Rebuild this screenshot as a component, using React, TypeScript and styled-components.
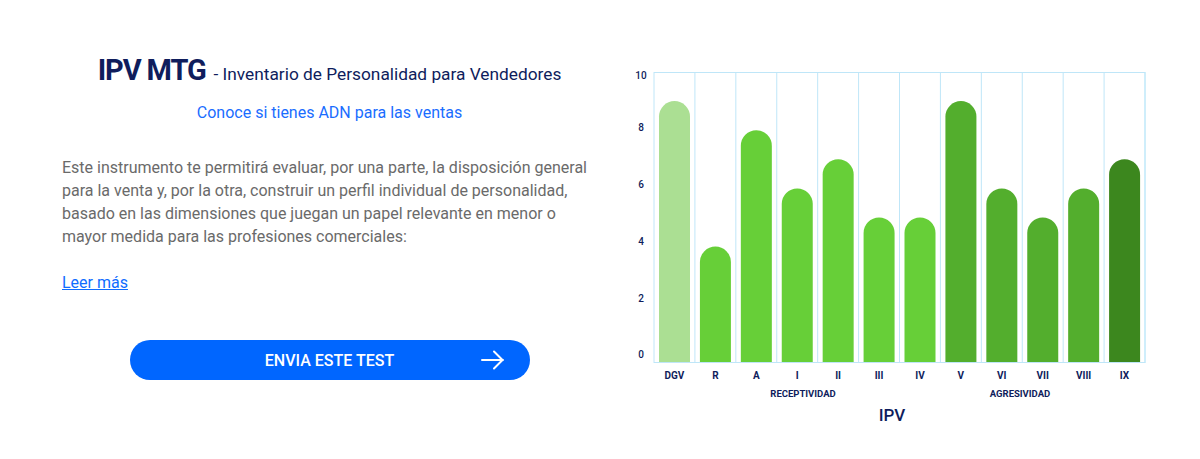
import React from 'react';
import styled, { createGlobalStyle } from 'styled-components';

const GlobalStyle = createGlobalStyle`
  body {
    margin: 0;
    background: #ffffff;
    font-family: Roboto, 'Liberation Sans', sans-serif;
  }
`;

const NAVY = '#0f1d5c';

const Page = styled.div`
  display: flex;
  align-items: flex-start;
  width: 1200px;
  height: 459px;
  padding-left: 62px;
  box-sizing: border-box;
`;

const Intro = styled.section`
  width: 535px;
  padding-top: 52px;
  display: flex;
  flex-direction: column;
`;

const Title = styled.h1`
  margin: 0;
  text-align: center;
  line-height: 34px;
  color: ${NAVY};
  font-weight: 400;
`;

const TitleMain = styled.span`
  font-size: 29px;
  font-weight: 700;
  letter-spacing: -1.1px;
`;

const TitleSub = styled.span`
  font-size: 17.3px;
`;

const Tagline = styled.p`
  margin: 12px 0 0;
  text-align: center;
  font-size: 16px;
  line-height: 20px;
  color: #1a6dff;
`;

const Body = styled.p`
  margin: 33px 0 0;
  font-size: 16px;
  line-height: 23px;
  color: #6a6a6a;
`;

const MoreLink = styled.a`
  margin-top: 25px;
  align-self: flex-start;
  font-size: 16px;
  line-height: 20px;
  color: #0f6cff;
  text-decoration: underline;
`;

const SendButton = styled.button`
  margin-top: 47px;
  align-self: center;
  width: 400px;
  height: 40px;
  border: none;
  border-radius: 20px;
  background: #0066ff;
  color: #ffffff;
  font-family: Roboto, sans-serif;
  font-size: 16px;
  font-weight: 500;
  display: grid;
  grid-template-columns: 1fr auto 1fr;
  align-items: center;
  padding: 0 25px;
`;

const ButtonLabel = styled.span`
  grid-column: 2;
`;

const ButtonIcon = styled.svg`
  grid-column: 3;
  justify-self: end;
`;

const ChartBox = styled.div`
  margin-left: 23px;
  margin-top: 60px;
  width: 540px;
  height: 370px;
`;

const data = [
  { label: 'DGV', value: 9, color: '#abdf93' },
  { label: 'R', value: 4, color: '#67cf38' },
  { label: 'A', value: 8, color: '#67cf38' },
  { label: 'I', value: 6, color: '#67cf38' },
  { label: 'II', value: 7, color: '#67cf38' },
  { label: 'III', value: 5, color: '#67cf38' },
  { label: 'IV', value: 5, color: '#67cf38' },
  { label: 'V', value: 9, color: '#53ae2d' },
  { label: 'VI', value: 6, color: '#53ae2d' },
  { label: 'VII', value: 5, color: '#53ae2d' },
  { label: 'VIII', value: 6, color: '#53ae2d' },
  { label: 'IX', value: 7, color: '#3c871e' },
];

const ticks = [
  { text: '10', y: 15 },
  { text: '8', y: 67 },
  { text: '6', y: 124 },
  { text: '4', y: 181 },
  { text: '2', y: 238 },
  { text: '0', y: 294 },
];

const Chart = () => {
  const left = 34;
  const right = 525;
  const top = 12;
  const bottom = 303;
  const colW = (right - left) / data.length;
  const unit = (bottom - top) / 10;
  const barW = 31;
  const r = barW / 2;

  return (
    <svg width="540" height="370" viewBox="0 0 540 370">
      {data.map((_, i) => (
        <line
          key={'g' + i}
          x1={left + colW * i}
          x2={left + colW * i}
          y1={top}
          y2={bottom}
          stroke="#bfe6f8"
          strokeWidth="1"
        />
      ))}
      <line x1={right} x2={right} y1={top} y2={bottom} stroke="#cfeefb" strokeWidth="2" />
      <line x1={left} x2={right} y1={top + 0.5} y2={top + 0.5} stroke="#bfe6f8" strokeWidth="1" />
      <line x1={left} x2={right} y1={bottom - 0.5} y2={bottom - 0.5} stroke="#bfe6f8" strokeWidth="1" />

      {data.map((d, i) => {
        const x = left + colW * i + 5;
        const h = d.value * unit;
        const y = bottom - h;
        return (
          <path
            key={d.label}
            d={`M${x} ${bottom - 1} V${y + r} A${r} ${r} 0 0 1 ${x + barW} ${y + r} V${bottom - 1} Z`}
            fill={d.color}
          />
        );
      })}

      {ticks.map((t) => (
        <text
          key={t.text}
          x="21"
          y={t.y}
          textAnchor="middle"
          dominantBaseline="central"
          fontFamily="Roboto, sans-serif"
          fontSize="10"
          fontWeight="500"
          fill={NAVY}
        >
          {t.text}
        </text>
      ))}

      {data.map((d, i) => (
        <text
          key={'l' + d.label}
          x={left + colW * (i + 0.5)}
          y="315"
          textAnchor="middle"
          dominantBaseline="central"
          fontFamily="Roboto, sans-serif"
          fontSize="10"
          fontWeight="700"
          fill={NAVY}
        >
          {d.label}
        </text>
      ))}

      <text x="183" y="333" textAnchor="middle" dominantBaseline="central" fontFamily="Roboto, sans-serif" fontSize="9.5" fontWeight="700" fill={NAVY}>
        RECEPTIVIDAD
      </text>
      <text x="400" y="333" textAnchor="middle" dominantBaseline="central" fontFamily="Roboto, sans-serif" fontSize="9.5" fontWeight="700" fill={NAVY}>
        AGRESIVIDAD
      </text>
      <text x="272" y="355" textAnchor="middle" dominantBaseline="central" fontFamily="Roboto, sans-serif" fontSize="17" fontWeight="500" fill={NAVY}>
        IPV
      </text>
    </svg>
  );
};

export default function App() {
  return (
    <>
      <GlobalStyle />
      <Page>
        <Intro>
          <Title>
            <TitleMain>IPV MTG</TitleMain> <TitleSub>- Inventario de Personalidad para Vendedores</TitleSub>
          </Title>
          <Tagline>Conoce si tienes ADN para las ventas</Tagline>
          <Body>
            Este instrumento te permitirá evaluar, por una parte, la disposición general para la venta y,
            por la otra, construir un perfil individual de personalidad, basado en las dimensiones que
            juegan un papel relevante en menor o mayor medida para las profesiones comerciales:
          </Body>
          <MoreLink href="#">Leer más</MoreLink>
          <SendButton type="button">
            <ButtonLabel>ENVIA ESTE TEST</ButtonLabel>
            <ButtonIcon width="24" height="20" viewBox="0 0 24 20" fill="none">
              <path d="M1 10H22M13 1.5L21.5 10L13 18.5" stroke="#ffffff" strokeWidth="2" strokeLinecap="round" strokeLinejoin="round" />
            </ButtonIcon>
          </SendButton>
        </Intro>
        <ChartBox>
          <Chart />
        </ChartBox>
      </Page>
    </>
  );
}
